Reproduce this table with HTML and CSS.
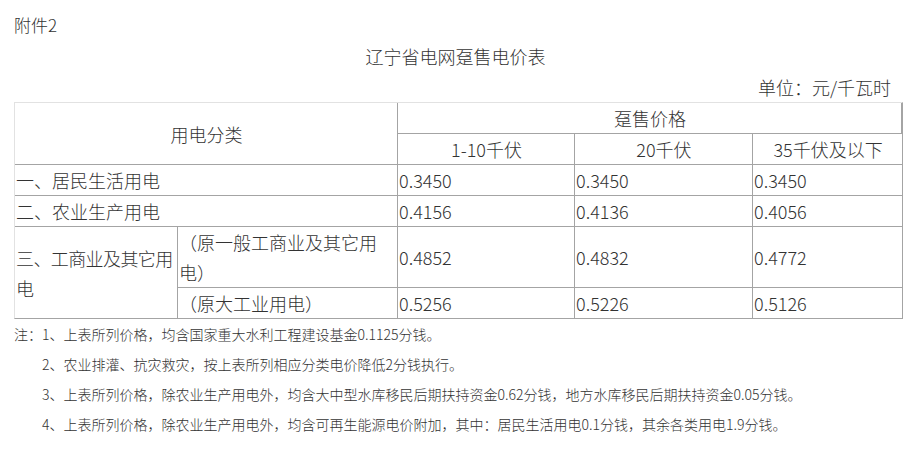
FILE: index.html
```html
<!DOCTYPE html>
<html lang="zh-CN">
<head>
<meta charset="utf-8">
<title>辽宁省电网趸售电价表</title>
<link rel="stylesheet" href="styles.css">
</head>
<body>
<div class="page">
  <p class="attach">附件2</p>
  <p class="title">辽宁省电网趸售电价表</p>
  <p class="unit">单位：元/千瓦时</p>
  <table class="price-table">
    <colgroup>
      <col class="c1"><col class="c2"><col class="c3"><col class="c4"><col class="c5">
    </colgroup>
    <tr>
      <td class="center" colspan="2" rowspan="2">用电分类</td>
      <td class="center" colspan="3">趸售价格</td>
    </tr>
    <tr>
      <td class="center">1-10千伏</td>
      <td class="center">20千伏</td>
      <td class="center last">35千伏及以下</td>
    </tr>
    <tr>
      <td colspan="2">一、居民生活用电</td>
      <td>0.3450</td><td>0.3450</td><td class="last">0.3450</td>
    </tr>
    <tr>
      <td colspan="2">二、农业生产用电</td>
      <td>0.4156</td><td>0.4136</td><td class="last">0.4056</td>
    </tr>
    <tr>
      <td rowspan="2" class="bottom tight">三、工商业及其它用<br>电</td>
      <td>（原一般工商业及其它用<br>电）</td>
      <td>0.4852</td><td>0.4832</td><td class="last">0.4772</td>
    </tr>
    <tr>
      <td class="bottom">（原大工业用电）</td>
      <td class="bottom">0.5256</td><td class="bottom">0.5226</td><td class="bottom last">0.5126</td>
    </tr>
  </table>
  <div class="notes">
    <p class="note first">注：1、上表所列价格，均含国家重大水利工程建设基金0.1125分钱。</p>
    <p class="note">2、农业排灌、抗灾救灾，按上表所列相应分类电价降低2分钱执行。</p>
    <p class="note">3、上表所列价格，除农业生产用电外，均含大中型水库移民后期扶持资金0.62分钱，地方水库移民后期扶持资金0.05分钱。</p>
    <p class="note">4、上表所列价格，除农业生产用电外，均含可再生能源电价附加，其中：居民生活用电0.1分钱，其余各类用电1.9分钱。</p>
  </div>
</div>
</body>
</html>
```

FILE: styles.css
```css
html, body {
  margin: 0;
  padding: 0;
  background: #ffffff;
}

body {
  font-family: "Noto Sans CJK SC", "Noto Sans", sans-serif;
  font-weight: 300;
  color: #333333;
  font-size: 18px;
}

.page {
  padding: 10px 19px 0 14px;
}

p {
  margin: 0;
}

.attach {
  font-size: 17px;
  line-height: 30px;
}

.title {
  line-height: 32px;
  text-align: center;
  padding-right: 6px;
}

.unit {
  line-height: 30px;
  text-align: right;
  padding-right: 12px;
}

.price-table {
  table-layout: fixed;
  width: 889px;
  border-collapse: separate;
  border-spacing: 0;
  border-top: 1px solid #e2e2e2;
  border-left: 1px solid #e2e2e2;
  border-right: 1px solid #a4a4a4;
  border-bottom: 1px solid #a4a4a4;
  font-size: 18px;
}

.c1 { width: 163px; }
.c2 { width: 220px; }
.c3 { width: 177px; }
.c4 { width: 178px; }
.c5 { width: 149px; }

.price-table td {
  padding: 0 0 0 1px;
  line-height: 30px;
  vertical-align: middle;
  text-align: left;
  white-space: nowrap;
  border-right: 1px solid #a4a4a4;
  border-bottom: 1px solid #a4a4a4;
  overflow: hidden;
}

.price-table td.tight {
  letter-spacing: -0.6px;
}

.price-table td.last {
  border-right: none;
}

.price-table td.bottom {
  border-bottom: none;
}

.price-table td.center {
  text-align: center;
}

.notes {
  font-size: 14px;
}

.note {
  line-height: 30px;
  padding-left: 28px;
}

.note.first {
  padding-left: 0;
}
```
